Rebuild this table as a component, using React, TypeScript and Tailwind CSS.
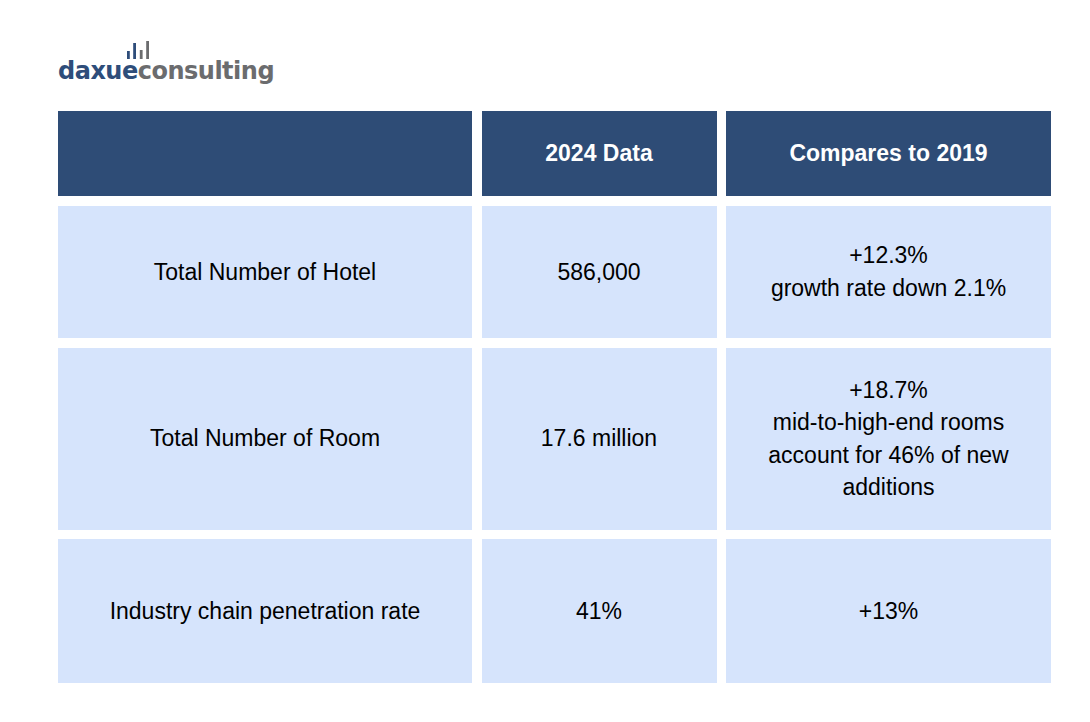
const rows: { label: string; value: string; compare: string[] }[] = [
  { label: 'Total Number of Hotel', value: '586,000', compare: ['+12.3%', 'growth rate down 2.1%'] },
  {
    label: 'Total Number of Room',
    value: '17.6 million',
    compare: ['+18.7%', 'mid-to-high-end rooms', 'account for 46% of new', 'additions'],
  },
  { label: 'Industry chain penetration rate', value: '41%', compare: ['+13%'] },
]

function Logo() {
  return (
    <div className="flex flex-col">
      <svg width="24" height="18" viewBox="0 0 24 18" className="ml-[69px]">
        <rect x="0" y="10" width="2.8" height="8" fill="#2e4d7a" />
        <rect x="6.2" y="2" width="2.8" height="16" fill="#2e4d7a" />
        <rect x="12.8" y="9" width="2.8" height="9" fill="#6b6c6e" />
        <rect x="19.2" y="0" width="2.8" height="18" fill="#6b6c6e" />
      </svg>
      <div className="mt-[1px] font-['DejaVu_Sans',sans-serif] text-[24px] font-bold leading-[23px] tracking-[-0.5px]">
        <span className="text-[#2e4d7a]">daxue</span>
        <span className="text-[#6b6c6e]">consulting</span>
      </div>
    </div>
  )
}

export default function App() {
  return (
    <div className="h-[722px] w-[1090px] bg-white pl-[58px] pt-[41px] font-['Liberation_Sans',Arial,sans-serif]">
      <Logo />
      <div className="mt-[28px] grid grid-cols-[414px_235px_325px] grid-rows-[85px_132.5px_182px_143.5px] gap-[9.5px] text-[23px] leading-[32.5px]">
        <div className="bg-[#2e4c76]" />
        <div className="flex items-center justify-center bg-[#2e4c76] font-bold text-white">2024 Data</div>
        <div className="flex items-center justify-center bg-[#2e4c76] font-bold text-white">Compares to 2019</div>
        {rows.map((r) => (
          <>
            <div key={r.label + 'a'} className="flex items-center justify-center bg-[#d6e4fc] text-black">{r.label}</div>
            <div key={r.label + 'b'} className="flex items-center justify-center bg-[#d6e4fc] text-black">{r.value}</div>
            <div key={r.label + 'c'} className="flex flex-col items-center justify-center bg-[#d6e4fc] text-center text-black">
              {r.compare.map((c) => (
                <span key={c}>{c}</span>
              ))}
            </div>
          </>
        ))}
      </div>
    </div>
  )
}
